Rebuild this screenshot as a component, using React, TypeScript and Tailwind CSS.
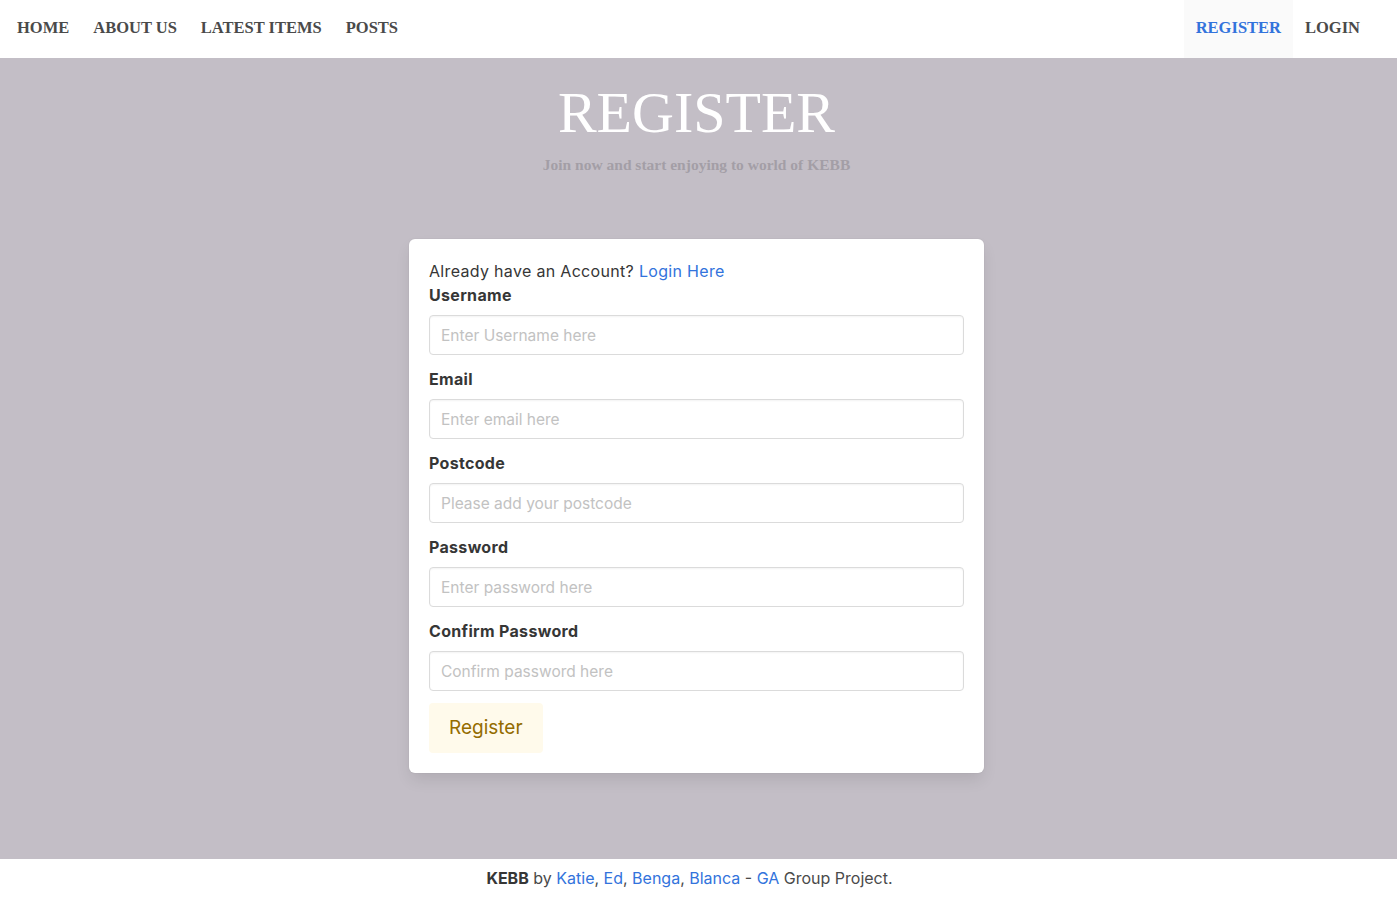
import React from "react";

const serif = "font-['Liberation_Serif',serif]";
const sans = "font-['Inter',sans-serif]";

const fields = [
  { label: "Username", placeholder: "Enter Username here", type: "text" },
  { label: "Email", placeholder: "Enter email here", type: "email" },
  { label: "Postcode", placeholder: "Please add your postcode", type: "text" },
  { label: "Password", placeholder: "Enter password here", type: "password" },
  { label: "Confirm Password", placeholder: "Confirm password here", type: "password" },
];

export default function App() {
  return (
    <div className={`min-h-screen flex flex-col bg-white text-[#4a4a4a] ${sans}`}>
      {/* Navbar */}
      <nav className={`h-[58px] bg-white flex items-stretch justify-between px-[5px] ${serif}`}>
        <div className="flex items-stretch">
          {["HOME", "ABOUT US", "LATEST ITEMS", "POSTS"].map((item) => (
            <a key={item} className="flex items-center px-3 pb-[2px] text-[16.5px] font-bold text-[#4a4a4a] cursor-pointer">
              {item}
            </a>
          ))}
        </div>
        <div className="flex items-stretch pr-[20px]">
          <a className="flex items-center px-3 pb-[2px] bg-[#fafafa] text-[16.5px] font-bold text-[#3273dc] cursor-pointer">
            REGISTER
          </a>
          <a className="flex items-center px-3 pb-[2px] text-[16.5px] font-bold text-[#4a4a4a] cursor-pointer">
            LOGIN
          </a>
        </div>
      </nav>

      {/* Hero */}
      <section className="h-[801px] bg-[#c3bec6] flex flex-col items-center pr-[4px]">
        <h1 className={`mt-[22px] text-[58px] leading-[66px] text-white ${serif}`}>REGISTER</h1>
        <p className={`mt-[7px] text-[15.5px] font-bold text-[#a39ea6] ${serif}`}>
          Join now and start enjoying to world of KEBB
        </p>

        <div className="mt-[63px] w-[575px] bg-white rounded-md p-5 tracking-[0.02em] shadow-[0_8px_16px_-2px_rgba(10,10,10,0.1),0_0_0_1px_rgba(10,10,10,0.02)]">
          <p className="text-[16px] leading-6 text-[#363636]">
            Already have an Account? <a className="text-[#3273dc] cursor-pointer">Login Here</a>
          </p>
          {fields.map((f, i) => (
            <div key={f.label} className={i === 0 ? "" : "mt-3"}>
              <label className="block text-[16px] leading-6 font-bold text-[#363636] mb-2">{f.label}</label>
              <input
                type={f.type}
                placeholder={f.placeholder}
                className="w-full h-10 px-[11px] rounded border border-[#dbdbdb] text-[15.5px] tracking-normal text-[#363636] placeholder:text-[#c2c2c2] shadow-[inset_0_1px_2px_rgba(10,10,10,0.05)] outline-none"
              />
            </div>
          ))}
          <button
            type="button"
            className="mt-3 h-[50px] px-5 rounded bg-[#fffaeb] text-[19px] tracking-normal text-[#946c00]"
          >
            Register
          </button>
        </div>
      </section>

      {/* Footer */}
      <footer className="bg-white pt-[7px] pb-12 pr-[18px] text-center text-[16px] leading-6 text-[#4a4a4a]">
        <strong className="text-[#363636]">KEBB</strong> by{" "}
        <a className="text-[#3273dc]">Katie</a>, <a className="text-[#3273dc]">Ed</a>,{" "}
        <a className="text-[#3273dc]">Benga</a>, <a className="text-[#3273dc]">Blanca</a> -{" "}
        <a className="text-[#3273dc]">GA</a> Group Project.
      </footer>
    </div>
  );
}
